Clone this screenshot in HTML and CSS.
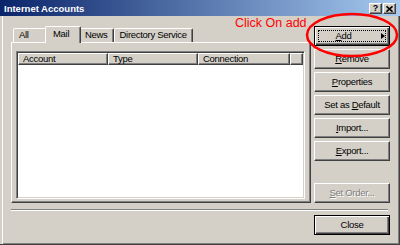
FILE: index.html
```html
<!DOCTYPE html>
<html lang="en">
<head>
  <meta charset="UTF-8" />
  <title>Internet Accounts</title>
  <link rel="stylesheet" href="styles.css">
</head>
<body>

  <div class="window">

    <!-- Title bar -->
    <header class="titlebar">
      <span class="title">Internet Accounts</span>
      <div class="caption-btns">
        <span class="cap-btn">?</span>
        <span class="cap-btn">
          <svg width="7" height="6" viewBox="0 0 7 6"><path d="M0.5 0.3 L6.5 5.7 M6.5 0.3 L0.5 5.7" stroke="#000" stroke-width="1.6" fill="none"/></svg>
        </span>
      </div>
    </header>

    <div class="frame">
      <div class="main">

        <!-- Tabs + account list -->
        <div class="tabview">
          <div class="tabs">
            <span class="tab">All</span>
            <span class="tab selected">Mail</span>
            <span class="tab">News</span>
            <span class="tab">Directory Service</span>
          </div>
          <div class="panel">
            <div class="list">
              <div class="list-header">
                <span class="col col-account">Account</span>
                <span class="col col-type">Type</span>
                <span class="col col-conn">Connection</span>
                <span class="col col-fill"></span>
              </div>
            </div>
          </div>
        </div>

        <!-- Buttons -->
        <div class="actions">
          <button class="btn btn-default btn-focus btn-menu"><span class="label"><u>A</u>dd</span><span class="arrow"></span></button>
          <button class="btn"><u>R</u>emove</button>
          <button class="btn"><u>P</u>roperties</button>
          <button class="btn">Set as <u>D</u>efault</button>
          <button class="btn"><u>I</u>mport...</button>
          <button class="btn"><u>E</u>xport...</button>
          <button class="btn btn-last" disabled><u>S</u>et Order...</button>
        </div>
      </div>

      <div class="separator"></div>

      <div class="footer">
        <button class="btn btn-default">Close</button>
      </div>
    </div>

    <!-- Annotation -->
    <div class="annotation">Click On add</div>
    <svg class="highlight" width="400" height="245" viewBox="0 0 400 245">
      <ellipse cx="352" cy="35" rx="45" ry="21" fill="none" stroke="#ff0000" stroke-width="2.5"/>
    </svg>
  </div>

</body>
</html>
```

FILE: styles.css
```css
* {
  margin: 0;
  padding: 0;
  box-sizing: border-box;
}

body {
  width: 400px;
  height: 245px;
  overflow: hidden;
  font-family: "Liberation Sans", Arial, sans-serif;
  font-size: 9.5px;
  letter-spacing: -0.3px;
  color: #000;
}

.window {
  position: relative;
  width: 400px;
  height: 245px;
  background: #d4d0c8;
  display: flex;
  flex-direction: column;
}

/* Title bar */
.titlebar {
  height: 16px;
  display: flex;
  align-items: center;
  justify-content: space-between;
  padding: 1px 4px 0 4px;
  background: linear-gradient(to right, #0a246a, #a6caf0);
}

.title {
  color: #fff;
  font-weight: bold;
  letter-spacing: 0;
  line-height: 14px;
  padding-top: 1px;
}

.caption-btns {
  display: flex;
  gap: 1px;
}

.cap-btn {
  width: 13px;
  height: 11px;
  display: flex;
  align-items: center;
  justify-content: center;
  background: #d4d0c8;
  border: 1px solid;
  border-color: #fff #404040 #404040 #fff;
  box-shadow: inset -1px -1px #808080;
  font-weight: bold;
  font-size: 9px;
  letter-spacing: 0;
  line-height: 9px;
}

/* Window body */
.frame {
  flex: 1;
  display: flex;
  flex-direction: column;
  padding: 10px 9px 0 11px;
  border-right: 1px solid #404040;
  border-bottom: 1px solid #404040;
  box-shadow: inset 2px 0 #d4d0c8, inset 3px 0 #fff, inset -1px -1px #808080;
}

.main {
  display: flex;
  gap: 3px;
  height: 177px;
}

/* Tabs */
.tabview {
  width: 300px;
  display: flex;
  flex-direction: column;
}

.tabs {
  display: flex;
  align-items: flex-end;
  height: 17px;
  padding-left: 2px;
  margin-bottom: -1px;
  position: relative;
  z-index: 1;
}

.tab {
  height: 14px;
  min-width: 34px;
  margin-bottom: 1px;
  padding: 0 5px;
  background: #d4d0c8;
  border: 1px solid;
  border-bottom: none;
  border-color: #fff #404040 transparent #fff;
  border-radius: 2px 2px 0 0;
  box-shadow: inset -1px 0 #808080;
  line-height: 12px;
  white-space: nowrap;
}

.tab.selected {
  height: 17px;
  min-width: 36px;
  margin: 0 -2px;
  padding: 0 7px;
  line-height: 14px;
  position: relative;
  z-index: 2;
}

.panel {
  flex: 1;
  display: flex;
  padding: 8px 5px 3px 4px;
  border: 1px solid;
  border-color: #fff #404040 #404040 #fff;
  box-shadow: inset -1px -1px #808080;
}

/* List view */
.list {
  flex: 1;
  padding: 1px;
  background: #fff;
  border: 1px solid;
  border-color: #808080 #fff #fff #808080;
  box-shadow: inset 1px 1px #404040, inset -1px -1px #d4d0c8;
}

.list-header {
  display: flex;
  height: 12px;
}

.col {
  height: 12px;
  padding-left: 4px;
  background: #d4d0c8;
  border: 1px solid;
  border-color: #fff #404040 #404040 #fff;
  box-shadow: inset -1px -1px #808080;
  line-height: 10px;
  white-space: nowrap;
}

.col-account { width: 90px; }
.col-type { width: 90px; }
.col-conn { width: 92px; }
.col-fill { flex: 1; }

/* Buttons */
.actions {
  width: 76px;
  display: flex;
  flex-direction: column;
  gap: 3px;
}

.btn {
  position: relative;
  width: 76px;
  height: 20px;
  background: #d4d0c8;
  border: 1px solid;
  border-color: #fff #404040 #404040 #fff;
  box-shadow: inset -1px -1px #808080;
  font-family: inherit;
  font-size: 9.5px;
  letter-spacing: -0.3px;
  line-height: 16px;
  text-align: center;
  white-space: nowrap;
  color: #000;
}

.btn-default {
  border-color: #000;
  box-shadow: inset 1px 1px #fff, inset -1px -1px #404040, inset -2px -2px #808080;
}

.btn-focus::after {
  content: "";
  position: absolute;
  inset: 3px;
  border: 1px dotted #000;
}

.btn-menu {
  display: flex;
  align-items: center;
}

.btn-menu .label {
  flex: 1;
  text-align: center;
  padding-right: 9px;
}

.btn-menu .arrow {
  width: 0;
  height: 0;
  margin-right: 4px;
  border-left: 4px solid #000;
  border-top: 3.5px solid transparent;
  border-bottom: 3.5px solid transparent;
}

.btn-last {
  margin-top: auto;
}

.btn:disabled {
  color: #808080;
  text-shadow: 1px 1px 0 #fff;
}

.separator {
  height: 2px;
  margin: 6px 2px 0 0;
  border-top: 1px solid #808080;
  border-bottom: 1px solid #fff;
}

.footer {
  display: flex;
  justify-content: flex-end;
  margin-top: 4px;
}

/* Red annotation */
.annotation {
  position: absolute;
  left: 235px;
  top: 17px;
  color: #ff0000;
  font-size: 12.5px;
  line-height: 12.5px;
  letter-spacing: 0;
}

.highlight {
  position: absolute;
  left: 0;
  top: 0;
  pointer-events: none;
}
```
